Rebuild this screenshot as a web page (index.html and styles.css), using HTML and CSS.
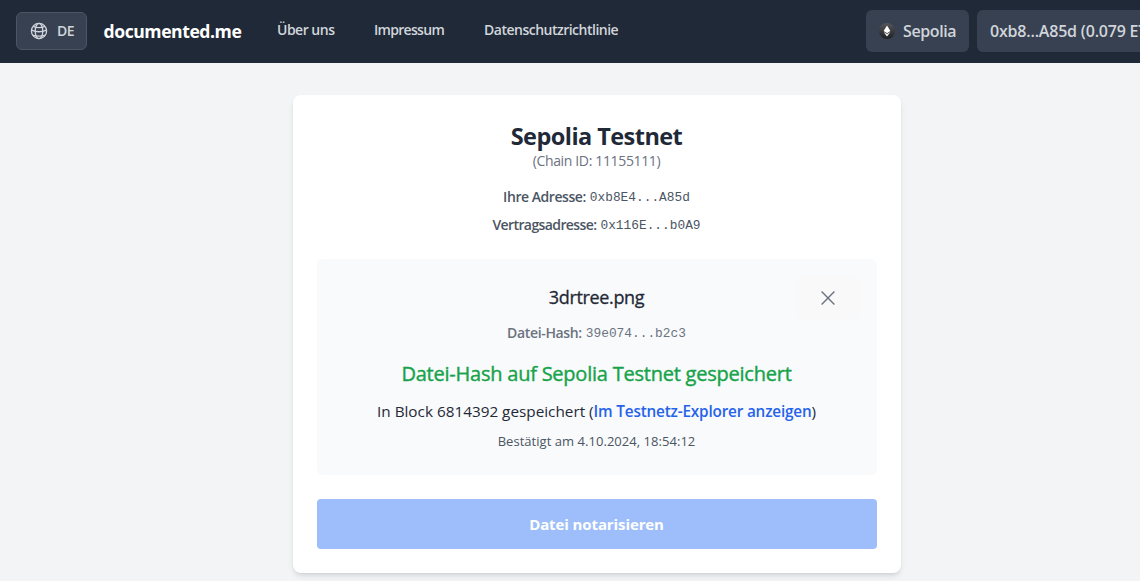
FILE: index.html
```
<!DOCTYPE html>
<html lang="de">
<head>
<meta charset="utf-8">
<title>documented.me</title>
<link rel="stylesheet" href="styles.css">
</head>
<body>
<header class="navbar">
  <button class="lang">
    <svg class="globe" viewBox="0 0 18 18" fill="none" stroke="currentColor" stroke-width="1.3"><circle cx="9" cy="9" r="7.6"/><ellipse cx="9" cy="9" rx="3.8" ry="7.6"/><path d="M1.4 8.2c4.6 1.9 10.6 1.9 15.2 0M3.2 4.3c3.4 1.6 8.2 1.6 11.6 0M2.6 13.2c3.8 1.2 9 1.2 12.8 0"/></svg>
    <span class="lang-code">DE</span>
  </button>
  <a class="brand"><span>documented.me</span></a>
  <nav class="links">
    <a class="link-about">Über uns</a>
    <a class="link-imprint">Impressum</a>
    <a class="link-privacy">Datenschutzrichtlinie</a>
  </nav>
  <div class="wallet">
    <button class="pill network">
      <svg class="eth" viewBox="0 0 16 16"><defs><linearGradient id="g" x1="0" y1="0" x2="0" y2="1"><stop offset="0" stop-color="#56565a"/><stop offset="1" stop-color="#1f2022"/></linearGradient></defs><circle cx="8" cy="8" r="8" fill="url(#g)"/><path d="M8 2.5 4.6 8.1 8 10.2 11.4 8.1z" fill="#fff"/><path d="M4.6 9 8 13.5 11.4 9 8 11z" fill="#f2f2f2"/></svg>
      <span class="network-name">Sepolia</span>
    </button>
    <button class="pill account"><span>0xb8...A85d (0.079 ETH)</span></button>
  </div>
</header>
<main class="card">
  <h1 class="title">Sepolia Testnet</h1>
  <p class="chain">(Chain ID: 11155111)</p>
  <p class="address"><span class="label label-own">Ihre Adresse:</span><code>0xb8E4...A85d</code></p>
  <p class="address contract"><span class="label label-contract">Vertragsadresse:</span><code>0x116E...b0A9</code></p>
  <section class="file">
    <button class="close" aria-label="Schließen"><svg viewBox="0 0 14 14" stroke="currentColor" stroke-width="1.4"><path d="M.6.6l12.8 12.8M13.4.6.6 13.4"/></svg></button>
    <h2 class="filename">3drtree.png</h2>
    <p class="hash"><span class="label label-hash">Datei-Hash:</span><code>39e074...b2c3</code></p>
    <p class="status">Datei-Hash auf Sepolia Testnet gespeichert</p>
    <p class="block"><span class="block-text">In Block 6814392 gespeichert (</span><a class="explorer">Im Testnetz-Explorer anzeigen</a><span>)</span></p>
    <p class="confirmed">Bestätigt am 4.10.2024, 18:54:12</p>
  </section>
  <button class="submit">Datei notarisieren</button>
</main>
</body>
</html>
```
FILE: styles.css
```
* { box-sizing: border-box; }
html { overflow: hidden; }
body { margin: 0; height: 581px; overflow: hidden; background: #f3f4f6; color: #1f2937; font: 16px/24px "Open Sans", "Noto Sans", sans-serif; }
h1, h2, p { margin: 0; padding-right: 1px; }
button { border: 0; font-family: inherit; white-space: nowrap; }
.navbar { display: flex; align-items: center; height: 63px; padding: 0 16px 1px; background: #1f2937; color: #d1d5db; white-space: nowrap; overflow: hidden; }
.lang { display: flex; align-items: center; flex: none; width: 71px; height: 38px; padding: 0 0 1px 13px; border: 1px solid #4b5563; border-radius: 6px; background: #374151; color: #d1d5db; }
.globe { width: 18px; height: 18px; margin-right: 9px; }
.lang-code { font-size: 14px; font-weight: 600; letter-spacing: -.5px; }
.brand { flex: none; width: 173px; padding-left: 16.5px; color: #fff; font-size: 17.6px; font-weight: 700; letter-spacing: -.45px; }
.links { display: flex; flex: none; margin-top: -2px; font-size: 14px; font-weight: 600; letter-spacing: -.5px; }
.links a { padding-left: 17px; }
.link-about { width: 97px; }
.link-imprint { width: 110px; letter-spacing: -.7px; }
.link-privacy { width: 399px; }
.wallet { display: flex; gap: 8px; flex: none; }
.pill { display: flex; align-items: center; height: 42px; border-radius: 6px; background: #374151; color: #d1d5db; font-size: 16px; font-weight: 600; }
.network { width: 103px; padding: 0 0 0 13px; }
.account { width: 202px; padding: 0 0 0 13px; letter-spacing: -.2px; }
.eth { width: 16px; height: 16px; margin-right: 8px; }
.network-name { letter-spacing: -.4px; }
.card { width: 608px; height: 478px; margin: 32px 0 0 293px; padding: 24px; border-radius: 8px; background: #fff; box-shadow: 0 4px 6px -1px rgba(0,0,0,.1), 0 2px 4px -2px rgba(0,0,0,.1); text-align: center; white-space: nowrap; }
.title { font-size: 23.5px; line-height: 34px; font-weight: 700; letter-spacing: -.55px; }
.chain { font-size: 14px; line-height: 16px; padding-bottom: 10px; color: #6b7280; letter-spacing: -.35px; }
.address { margin-top: 8px; font-size: 14px; line-height: 20px; color: #4b5563; }
.label { margin-right: 4px; font-weight: 600; letter-spacing: -.45px; }
.label-contract { letter-spacing: -.6px; }
code { font: 12.83px/1 "Liberation Mono", monospace; vertical-align: 1px; }
.file { position: relative; height: 216px; margin-top: 24px; padding-top: 24px; border-radius: 6px; background: #f9fafb; }
.close { position: absolute; top: 17px; right: 17px; display: grid; place-items: center; width: 64px; height: 43px; border-radius: 8px; background: #f9f9f9; color: #6b7280; }
.close svg { width: 14px; height: 14px; }
.filename { font-size: 18px; line-height: 28px; font-weight: 400; letter-spacing: -.35px; -webkit-text-stroke: .3px currentColor; }
.hash { margin-top: 12px; font-size: 14px; line-height: 20px; color: #6b7280; }
.label-hash { letter-spacing: -.35px; }
.status { margin-top: 17px; font-size: 20px; line-height: 28px; font-weight: 400; color: #16a34a; letter-spacing: -.23px; -webkit-text-stroke: .4px currentColor; }
.block { margin-top: 11px; font-size: 15.3px; line-height: 24px; }
.explorer { color: #2563eb; font-weight: 600; letter-spacing: -.18px; }
.confirmed { margin-top: 8px; font-size: 13px; line-height: 20px; color: #4b5563; letter-spacing: .04px; }
.submit { width: 560px; height: 50px; margin-top: 24px; padding: 0 1px 0 0; border-radius: 4px; background: #9dbefa; color: #fff; font-size: 15px; font-weight: 700; letter-spacing: -.1px; }
```
